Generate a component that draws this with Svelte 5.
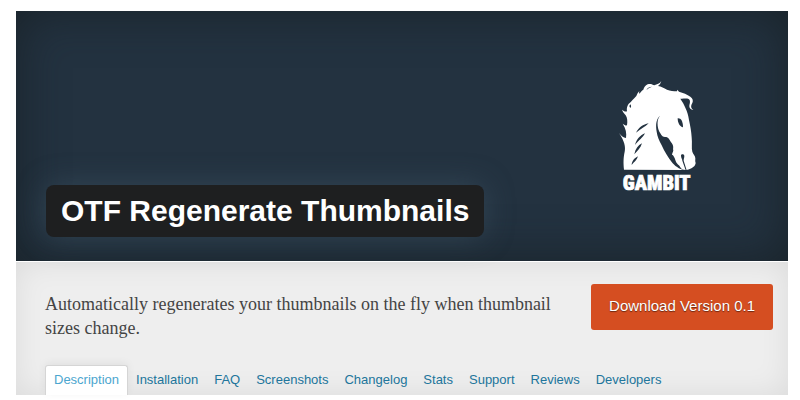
<script lang="ts">
	interface Tab {
		label: string;
		id: string;
	}

	const tabs: Tab[] = [
		{ label: 'Description', id: 'description' },
		{ label: 'Installation', id: 'installation' },
		{ label: 'FAQ', id: 'faq' },
		{ label: 'Screenshots', id: 'screenshots' },
		{ label: 'Changelog', id: 'changelog' },
		{ label: 'Stats', id: 'stats' },
		{ label: 'Support', id: 'support' },
		{ label: 'Reviews', id: 'reviews' },
		{ label: 'Developers', id: 'developers' }
	];

	let active = $state('description');
</script>

<main class="plugin">
	<header class="banner">
		<h1 class="plugin-title">OTF Regenerate Thumbnails</h1>
		<svg class="logo" viewBox="0 0 240 340" role="img" aria-label="Gambit">
			<path
				d="M12 257 C10 235 10 222 14 203 C17 190 14 172 -3 147 C4 156 10 161 18 162 C20 148 18 134 8 119 C14 124 18 125 21 124 C23 112 22 101 17 94 C13 88 8 84 6 77 C12 82 17 84 21 82 C19 68 24 60 33 53 C40 46 43 42 49 36 C51 30 54 25 58 21 C57 26 57 28 59 29 C62 24 65 20 70 17 C72 10 76 4 83 1 C91 -2 97 1 103 4 C111 1 119 -1 124 -9 C122 -2 119 3 114 6 C124 8 132 12 141 17 C151 21 160 22 171 22 L172 17 L177 23 C189 26 202 31 211 38 C219 44 220 50 217 57 C212 66 212 72 220 78 C210 77 206 69 209 60 C211 52 210 47 206 45 C198 42 190 45 181 44 C188 54 192 62 196 71 C202 83 205 94 207 108 C211 126 214 143 215 160 C217 177 214 193 217 203 C219 211 226 214 226 223 C226 228 225 232 227 237 C226 246 218 254 199 258 Z"
			/>
			<path
				class="cut"
				d="M120 95 C113 103 112 114 113 125 C114 135 117 142 121 148 C126 158 131 160 138 159 C148 161 149 170 155 177 C163 188 158 193 160 199 C159 204 157 207 156 212 C160 213 164 220 167 231 C171 242 177 241 181 250 C184 256 189 257 199 259 C184 259 168 249 158 238 C143 220 134 203 125 184 C117 168 112 158 110 143 C107 125 107 107 120 95Z"
			/>
			<path class="cut" d="M173 103 C183 102 189 112 189 130 C180 128 173 118 173 103Z" />
			<path class="cut" d="M183 215 C183 209 193 209 193 216 C193 221 191 224 191 230 L200 259 L197 259 L187 230 C187 224 183 222 183 215Z" />
			<path class="cut" d="M31 61 C27 65 28 69 31 72 C34 69 34 65 31 61Z M79 18 C83 10 89 8 96 8 C88 11 83 14 79 18Z" />
			<path
				class="cut"
				d="M48 146 C57 130 69 121 86 118 C75 129 63 134 48 146Z M45 183 C50 165 61 154 75 148 C69 161 56 169 45 183Z M43 211 C46 195 54 184 66 178 C62 192 52 200 43 211Z M35 243 C36 230 44 222 54 217 C51 229 42 234 35 243Z"
			/>
			<text x="8" y="317">GAMBIT</text>
		</svg>
	</header>

	<section class="summary">
		<div class="intro">
			<p class="description">
				Automatically regenerates your thumbnails on the fly when thumbnail sizes change.
			</p>
			<a class="download" href="#download">Download Version 0.1</a>
		</div>
		<nav class="tabs" aria-label="Plugin sections">
			{#each tabs as tab (tab.id)}
				<a
					href="#{tab.id}"
					class:active={active === tab.id}
					aria-current={active === tab.id ? 'page' : undefined}
					onclick={() => (active = tab.id)}>{tab.label}</a
				>
			{/each}
		</nav>
	</section>
</main>

<style>
	:global(body) {
		background: #fff;
	}

	.plugin {
		margin: 11px 12px 5px 16px;
		font-family: 'Liberation Sans', Arial, sans-serif;
	}

	.banner {
		display: flex;
		align-items: flex-end;
		justify-content: space-between;
		gap: 24px;
		min-height: 250px;
		box-sizing: border-box;
		padding: 24px 88px 24px 30px;
		background: #233240;
		box-shadow: inset 0 0 48px rgba(22, 28, 32, 0.7);
	}

	.plugin-title {
		margin: 0;
		padding: 8px 15px;
		border-radius: 8px;
		background: #1e1f20;
		box-shadow: 0 0 30px rgba(70, 95, 110, 0.45);
		color: #fff;
		font-size: 30px;
		font-weight: bold;
		line-height: 36px;
	}

	.logo {
		flex: none;
		width: 80px;
		margin-bottom: 40px;
		overflow: visible;
		fill: #fff;
	}

	.logo .cut {
		fill: #233240;
	}

	.logo text {
		font-family: 'Liberation Sans Narrow', 'Roboto Condensed', Roboto, sans-serif;
		font-size: 61px;
		font-weight: 900;
		stroke: #fff;
		stroke-width: 2px;
	}

	.summary {
		margin-top: 1px;
		padding: 22px 15px 0 29px;
		background: #eee;
		box-shadow: inset 0 0 30px rgba(0, 0, 0, 0.08);
	}

	.intro {
		display: flex;
		align-items: flex-start;
		justify-content: space-between;
		gap: 24px;
		min-height: 81px;
	}

	.description {
		max-width: 512px;
		margin: 8px 0 0;
		color: #444;
		font-family: Georgia, 'Liberation Serif', serif;
		font-size: 18px;
		line-height: 24px;
	}

	.download {
		flex: none;
		padding: 10px 18px 12px;
		border-radius: 3px;
		background: #d54e21;
		color: #fff;
		font-size: 15px;
		line-height: 24px;
		text-decoration: none;
		text-shadow: 0 1px 1px rgba(0, 0, 0, 0.5);
	}

	.tabs {
		display: flex;
	}

	.tabs a {
		padding: 6px 8px 7px;
		border-top: 1px solid transparent;
		border-radius: 3px 3px 0 0;
		color: #21759b;
		font-size: 13px;
		line-height: 16px;
		text-decoration: none;
	}

	.tabs a.active {
		border: 1px solid #d5d5d5;
		border-bottom: 0;
		background: #fff;
		box-shadow: 0 -2px 8px rgba(0, 0, 0, 0.06);
		color: #4ca6cf;
	}
</style>
